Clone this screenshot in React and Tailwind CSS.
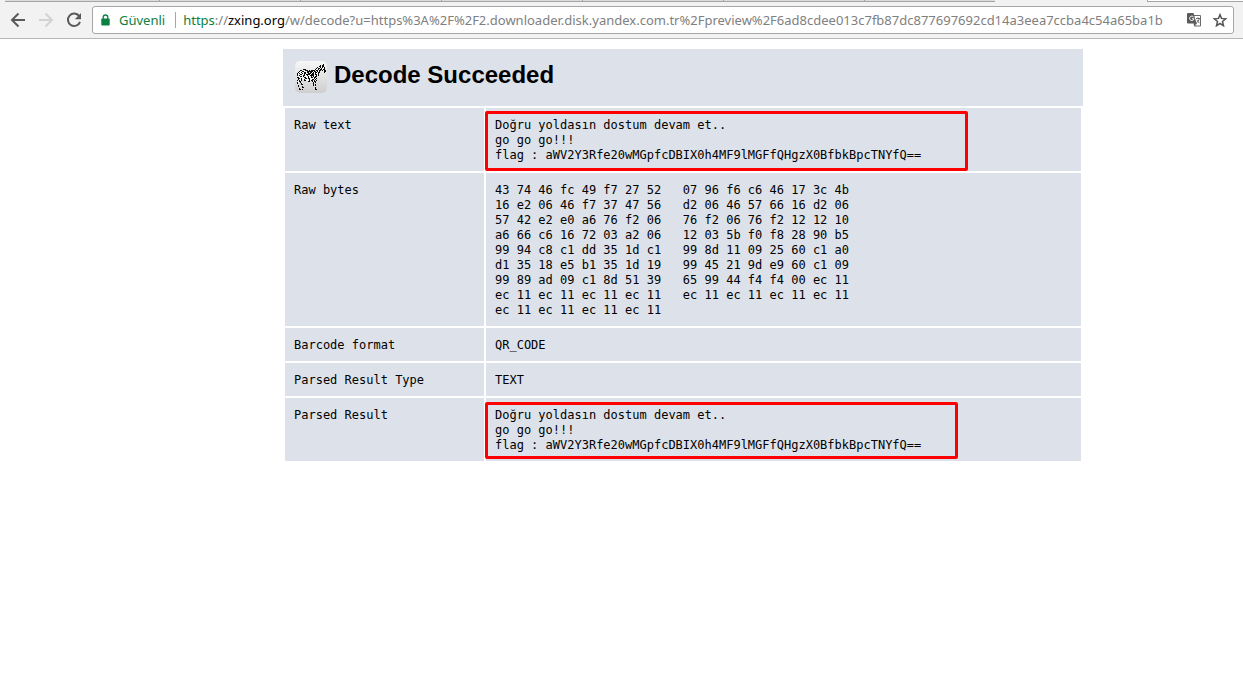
import React from "react";

const mono = "font-['DejaVu_Sans_Mono','Liberation_Mono',monospace]";

const MESSAGE = `Doğru yoldasın dostum devam et..
go go go!!!
flag : aWV2Y3Rfe20wMGpfcDBIX0h4MF9lMGFfQHgzX0BfbkBpcTNYfQ==`;

const BYTES = `43 74 46 fc 49 f7 27 52   07 96 f6 c6 46 17 3c 4b
16 e2 06 46 f7 37 47 56   d2 06 46 57 66 16 d2 06
57 42 e2 e0 a6 76 f2 06   76 f2 06 76 f2 12 12 10
a6 66 c6 16 72 03 a2 06   12 03 5b f0 f8 28 90 b5
99 94 c8 c1 dd 35 1d c1   99 8d 11 09 25 60 c1 a0
d1 35 18 e5 b1 35 1d 19   99 45 21 9d e9 60 c1 09
99 89 ad 09 c1 8d 51 39   65 99 44 f4 f4 00 ec 11
ec 11 ec 11 ec 11 ec 11   ec 11 ec 11 ec 11 ec 11
ec 11 ec 11 ec 11 ec 11`;

const ROWS = [
  { label: "Raw text", value: MESSAGE, mark: "top-[3px] h-[60px] w-[483px]" },
  { label: "Raw bytes", value: BYTES },
  { label: "Barcode format", value: "QR_CODE" },
  { label: "Parsed Result Type", value: "TEXT" },
  { label: "Parsed Result", value: MESSAGE, mark: "top-1 h-[57px] w-[473px]" },
];

// Rows of the zebra, from top to bottom; "#" is a stripe, "o" is white coat.
const ZEBRA = [
  "............................#...",
  ".........................#.##...",
  "........................##o##...",
  "......................#.o#o#o#..",
  ".....................#o##o#oo#..",
  "........###.........#.o#o##o##..",
  ".....##.oo###.#.####o##o##.#o##.",
  "....#oo##ooo######o##o#o#...o##.",
  "...#oo#oo##o##o##o#o##o##....#..",
  "..#o#oo#o##oo###o##o#oo#........",
  "..#oo##oo#o####o###o##o#........",
  "..#o#ooo##oo#oo####oo#o#........",
  "...oo##o#oooo#oo#o#o##..........",
  "..##ooooo##oo#oo##o##...........",
  "...##o#ooo##o##oooo#o#..........",
  "...#oo#oo#oooo#oo##o#...........",
  "..#o#o#..##ooo#o##o#o#..........",
  "...o##.......##..#o##...........",
  "..#o.#............#o#...........",
  "..#...#o..........#.............",
  "......##..........#.#...........",
  "...#...o..........#.#...........",
  "...#...#............o...........",
  ".......##...........#...........",
  "....#...............#...........",
  "....##.#............##..........",
];

function BackIcon() {
  return (
    <svg width="16" height="16" viewBox="0 0 16 16" fill="none" stroke="currentColor" strokeWidth="2" aria-hidden="true">
      <path d="M15 8H2.5M8.5 1.5L2 8l6.500 6.500" />
    </svg>
  );
}

function ForwardIcon() {
  return (
    <svg width="16" height="16" viewBox="0 0 16 16" fill="none" stroke="currentColor" strokeWidth="2" aria-hidden="true">
      <path d="M1 8h12.500M7.500 1.500L14 8l-6.500 6.500" />
    </svg>
  );
}

function ReloadIcon() {
  return (
    <svg width="16" height="16" viewBox="0 0 16 16" aria-hidden="true">
      <path d="M13.200 4.200A6.200 6.200 0 1 0 14 9.800" fill="none" stroke="currentColor" strokeWidth="2" />
      <path d="M15 1v6.200H8.800z" fill="currentColor" />
    </svg>
  );
}

function LockIcon() {
  return (
    <svg width="9" height="12" viewBox="0 0 9 12" aria-hidden="true">
      <path d="M2.200 5V3.300a2.300 2.300 0 0 1 4.600 0V5" fill="none" stroke="currentColor" strokeWidth="1.300" />
      <rect x="0.300" y="4.500" width="8.400" height="7" rx="0.800" fill="currentColor" />
    </svg>
  );
}

function TranslateIcon() {
  return (
    <svg width="14" height="14" viewBox="0 0 14 14" aria-hidden="true">
      <path d="M6 2.500h7.500v10.500H7.500z" fill="#fff" stroke="#6b6b6b" strokeWidth="1" />
      <path d="M1 0h5.500l3 10.500H1a1 1 0 0 1-1-1V1a1 1 0 0 1 1-1z" fill="#5a5a5a" />
      <path d="M6.600 4A2.200 2.200 0 1 0 7 5.800H5" fill="none" stroke="#fff" strokeWidth="1" />
      <path d="M9 5.500h4M11 4.500v1M12.300 5.500c-.4 2-1.500 3.500-3 4.500M9.800 7l2.600 3.200M7.500 10.500v2.500l2-2.500z" fill="none" stroke="#5a5a5a" strokeWidth="0.900" />
    </svg>
  );
}

function StarIcon() {
  return (
    <svg width="14" height="14" viewBox="0 0 14 14" aria-hidden="true">
      <path d="M7 1.700l1.500 3.700 4.200.4-3.200 2.700 1 4.200L7 10.500l-3.500 2.200 1-4.200-3.200-2.700 4.200-.4z" fill="none" stroke="#555" strokeWidth="1.500" />
    </svg>
  );
}

function ZebraLogo() {
  return (
    <svg width="32" height="32" viewBox="0 0 32 32" role="img" aria-label="ZXing" className="shrink-0">
      <defs>
        <linearGradient id="tile" x1="0" y1="0" x2="0" y2="1">
          <stop offset="0" stopColor="#f7f7f7" />
          <stop offset="1" stopColor="#cecece" />
        </linearGradient>
      </defs>
      <rect width="32" height="32" rx="5" fill="url(#tile)" />
      {ZEBRA.map((line, y) =>
        [...line].map((cell, x) =>
          cell === "." ? null : (
            <rect key={`${x}-${y}`} x={x} y={y + 3} width="1" height="1" fill={cell === "#" ? "#0a0a0a" : "#f4f4f4"} />
          )
        )
      )}
    </svg>
  );
}

function BrowserBar() {
  return (
    <header className="bg-[#f2f2f2] font-['Noto_Sans','Open_Sans',sans-serif]">
      <div className="flex h-[2px] items-stretch">
        <div className="ml-[5px] flex w-[990px] divide-x divide-[#a5a5a5] border-b border-[#a5a5a5] bg-[#dcdcdc]">
          <span className="w-[155px]" />
          <span className="w-[141px]" />
          <span className="w-[141px]" />
          <span className="w-[141px]" />
          <span className="w-[141px]" />
          <span className="w-[141px]" />
          <span className="flex-1" />
        </div>
        <div className="flex-1" />
        <div className="w-[96px] border-b border-l border-[#a5a5a5] bg-white" />
      </div>
      <div className="flex h-[37px] items-center border-b border-[#b6b6b6] pr-[9px] pl-2.5">
        <nav className="flex items-center gap-3 text-[#5a5a5a]">
          <button type="button" aria-label="Back"><BackIcon /></button>
          <button type="button" aria-label="Forward" disabled className="text-[#d3d3d3]"><ForwardIcon /></button>
          <button type="button" aria-label="Reload"><ReloadIcon /></button>
        </nav>
        <div className="ml-2.5 flex h-7 min-w-0 flex-1 items-center rounded-[3px] border border-[#a6a6a6] bg-white pl-2 pr-1.5 text-[13px] leading-5">
          <span className="flex shrink-0 items-center gap-[9px] text-[#0b8043]">
            <LockIcon />
            Güvenli
          </span>
          <span className="mr-[7px] ml-[10px] h-4 w-px shrink-0 bg-[#a6a6a6]" />
          <a href="#url" className="min-w-0 flex-1 overflow-hidden whitespace-nowrap text-[#808080]">
            <span className="text-[#0b8043]">https</span>://<span className="text-black">zxing.org</span>/w/decode?u=https%3A%2F%2F2.downloader.disk.yandex.com.tr%2Fpreview%2F6ad8cdee013c7fb87dc877697692cd14a3eea7ccba4c54a65ba1b
          </a>
          <span className="ml-2 flex shrink-0 items-center gap-3">
            <button type="button" aria-label="Translate"><TranslateIcon /></button>
            <button type="button" aria-label="Bookmark"><StarIcon /></button>
          </span>
        </div>
      </div>
    </header>
  );
}

export default function App() {
  return (
    <div className="min-h-screen bg-white text-black">
      <BrowserBar />
      <main className="flex justify-center pt-2.5 pl-[123px]">
        <div className="w-full max-w-[800px]">
          <div className="flex items-start gap-[7px] bg-[#dde2ea] px-3 pt-3 pb-[13px]">
            <ZebraLogo />
            <h1 className="font-['Liberation_Sans',Arial,sans-serif] text-2xl leading-7 font-bold">Decode Succeeded</h1>
          </div>
          <table className={`w-full table-fixed border-separate border-spacing-[2px] text-xs leading-[15px] ${mono}`}>
            <colgroup>
              <col className="w-[199px]" />
              <col />
            </colgroup>
            <tbody>
              {ROWS.map((row) => (
                <tr key={row.label} className="bg-[#dde2ea] text-left align-top">
                  <th scope="row" className="px-[9px] pt-[10px] pb-2 font-normal">{row.label}</th>
                  <td className="relative px-[9px] pt-[10px] pb-2">
                    <pre className={mono}>{row.value}</pre>
                    {row.mark && (
                      <span className={`absolute -left-px rounded-[2px] border-3 border-[#ff0000] ${row.mark}`} />
                    )}
                  </td>
                </tr>
              ))}
            </tbody>
          </table>
        </div>
      </main>
    </div>
  );
}
